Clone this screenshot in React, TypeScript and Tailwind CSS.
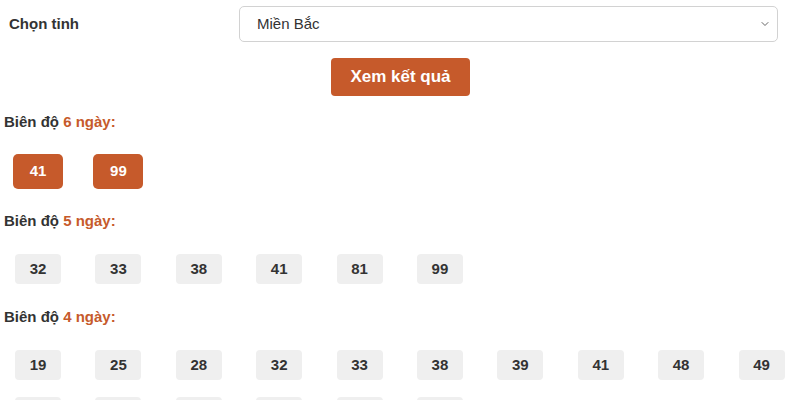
import { ChevronDown } from "lucide-react";

const ORANGE = "text-[#c65a2b]";

type Group = { days: number; numbers: string[]; hot?: boolean };

const groups: Group[] = [
  { days: 6, numbers: ["41", "99"], hot: true },
  { days: 5, numbers: ["32", "33", "38", "41", "81", "99"] },
  { days: 4, numbers: ["19", "25", "28", "32", "33", "38", "39", "41", "48", "49", "53", "55", "60", "68", "81", "99"] },
];

function NumberBox({ value, hot }: { value: string; hot?: boolean }) {
  if (hot) {
    return (
      <div className="w-[50px] h-[35px] -mx-[2px] rounded-[5px] bg-[#c65a2b] text-white flex items-center justify-center text-[15px] font-bold">
        {value}
      </div>
    );
  }
  return (
    <div className="w-[46px] h-[30px] rounded-[4px] bg-[#efefef] text-[#333] flex items-center justify-center text-[15px] font-bold">
      {value}
    </div>
  );
}

export default function App() {
  return (
    <div className="w-[800px] h-[400px] overflow-hidden bg-white font-['Liberation_Sans',Arial,sans-serif] text-[#333]">
      {/* Province picker */}
      <div className="flex items-start pt-[6px]">
        <label className="w-[239px] pl-[9px] pt-[7px] text-[15px] font-bold text-[#333]">Chọn tỉnh</label>
        <div className="w-[539px] h-[36px] border border-[#d2d2d2] rounded-[5px] flex items-center justify-between pl-[17px] pr-[6px]">
          <span className="text-[15px] text-[#333]">Miền Bắc</span>
          <ChevronDown className="w-[12px] h-[12px] text-[#666]" strokeWidth={2} />
        </div>
      </div>

      <div className="flex justify-center pt-[16px] pl-[1px]">
        <button className="w-[139px] h-[38px] rounded-[4px] bg-[#c65a2b] text-white text-[17px] font-bold">
          Xem kết quả
        </button>
      </div>

      {/* Amplitude groups */}
      <div className="pt-[17px]">
        {groups.map((g) => (
          <div key={g.days} className={g.hot ? "mb-[23px]" : "mb-[24px]"}>
            <div className="pl-[4px] text-[15px] font-bold leading-[18px]">
              Biên độ <span className={ORANGE}>{g.days} ngày:</span>
            </div>
            <div className={`flex flex-wrap pl-[15px] gap-x-[34.4px] gap-y-[17px] ${g.hot ? "pt-[23px]" : "pt-[24px]"}`}>
              {g.numbers.map((n, i) => (
                <NumberBox key={i} value={n} hot={g.hot} />
              ))}
            </div>
          </div>
        ))}
      </div>
    </div>
  );
}
